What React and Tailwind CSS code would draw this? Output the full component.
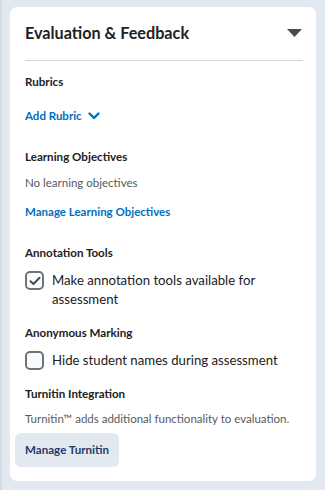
const LINK = 'text-[11.5px] font-bold leading-[16px] text-[#006fbf]'
const LABEL = 'text-[11.6px] font-bold leading-[16px] text-[#202122]'
const MUTED = 'text-[11.5px] leading-[16px] text-[#565a5c]'
const OPTION = 'text-[13.2px] leading-[19px] text-[#202122]'

function Checkbox({ checked }) {
  return (
    <span className="flex h-[19px] w-[19px] flex-shrink-0 items-center justify-center rounded-[5px] border-2 border-[#6e7376] bg-[#f9fbff]">
      {checked && (
        <svg width="12" height="10" viewBox="0 0 12 10" fill="none">
          <path d="M1.5 5.2 L4.5 8 L10.5 1.8" stroke="#494c4e" strokeWidth="2" strokeLinecap="round" strokeLinejoin="round" />
        </svg>
      )}
    </span>
  )
}

export default function App() {
  return (
    <div className="h-[490px] w-[325px] overflow-hidden border-l-2 border-[#d5dce4] bg-[#e3e9f1] pl-[8px] pr-[9px] pt-[7px] font-['Lato',sans-serif]">
      <div className="rounded-[7px] bg-white px-[5px] pb-[14px] pt-[14px]">
        <div className="pl-[10px] pr-[8px]">
          <div className="flex items-center justify-between border-b border-[#cdd5dc] pb-[15px]">
            <h2 className="text-[16.2px] font-bold leading-[24px] text-[#202122]">Evaluation &amp; Feedback</h2>
            <svg width="15" height="8" viewBox="0 0 15 8" className="mr-[1px]">
              <path d="M0 0 H15 L7.5 8 Z" fill="#494c4e" />
            </svg>
          </div>

          <p className={`${LABEL} mt-[13px]`}>Rubrics</p>
          <button className={`${LINK} mt-[18px] flex items-center gap-[6px]`}>
            Add Rubric
            <svg width="12" height="8" viewBox="0 0 12 8" fill="none">
              <path d="M1.5 1.5 L6 6 L10.5 1.5" stroke="#006fbf" strokeWidth="2.4" strokeLinecap="round" strokeLinejoin="round" />
            </svg>
          </button>

          <p className={`${LABEL} mt-[25px]`}>Learning Objectives</p>
          <p className={`${MUTED} mt-[10px]`}>No learning objectives</p>
          <button className={`${LINK} mt-[13px] block`}>Manage Learning Objectives</button>

          <p className={`${LABEL} mt-[25px]`}>Annotation Tools</p>
          <label className="mt-[10px] flex gap-[8px]">
            <Checkbox checked />
            <span className={OPTION}>Make annotation tools available for assessment</span>
          </label>

          <p className={`${LABEL} mt-[16px]`}>Anonymous Marking</p>
          <label className="mt-[10px] flex gap-[8px]">
            <Checkbox />
            <span className={OPTION}>Hide student names during assessment</span>
          </label>

          <p className={`${LABEL} mt-[16px]`}>Turnitin Integration</p>
          <p className={`${MUTED} mt-[9px]`}>Turnitin™ adds additional functionality to evaluation.</p>
        </div>
        <button className="mt-[6px] h-[34px] rounded-[6px] bg-[#e3e9f1] px-[10px] text-[11.6px] font-bold text-[#1c3a6b]">
          Manage Turnitin
        </button>
      </div>
    </div>
  )
}
